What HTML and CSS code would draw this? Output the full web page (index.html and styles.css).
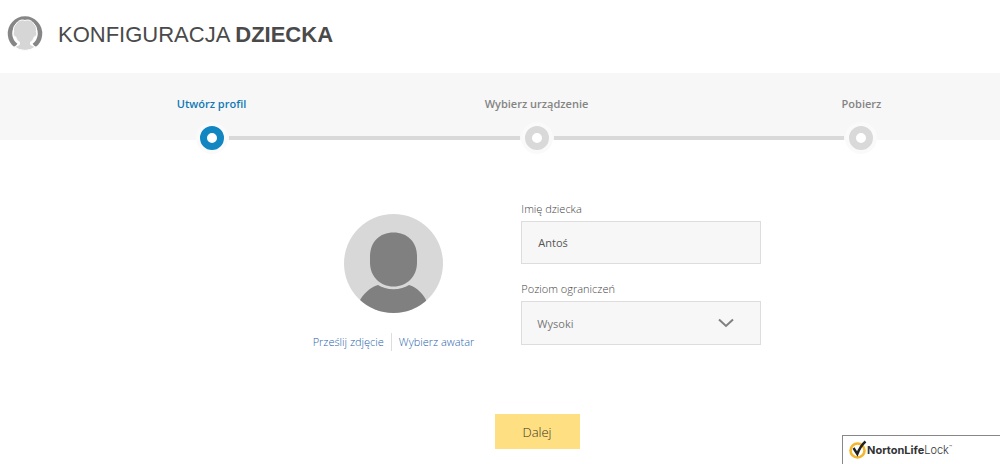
FILE: index.html
```html
<!DOCTYPE html>
<html lang="pl">

<head>
  <meta charset="UTF-8">
  <meta name="viewport" content="width=device-width, initial-scale=1.0">
  <title>Konfiguracja dziecka</title>
  <link rel="stylesheet" href="styles.css">
</head>

<body>
  <header class="header">
    <svg class="header-icon" viewBox="0 0 36 36" aria-hidden="true">
      <path d="M9 30.500A15 15 0 1 1 27 30.500" fill="none" stroke="#868686" stroke-width="4.500"/>
      <path d="M18 5.500c3.500-1.500 7.500.5 9 3.500 2.500 2 3 5.500 2.200 8 1.500 2-.2 4.500-2 5-.7 3-2.200 4-3.700 5v2.500c1.500 1.200 3.500 1.500 5 2.300a17 17 0 0 1-21 0c1.500-.8 3.500-1.100 5-2.300V27c-1.500-1-3-2-3.700-5-1.800-.5-3.500-3-2-5-.8-2.500-.3-6 2.200-8C10.500 6 14.500 4 18 5.500z" fill="#d6d6d6" stroke="#fff" stroke-width="1"/>
    </svg>
    <h1 class="title">KONFIGURACJA <strong>DZIECKA</strong></h1>
  </header>

  <nav class="steps" aria-label="Kroki">
    <div class="steps-list">
      <div class="step active" aria-current="step">
        <span class="step-label">Utwórz profil</span>
        <span class="step-dot"></span>
      </div>
      <div class="step-line"></div>
      <div class="step">
        <span class="step-label">Wybierz urządzenie</span>
        <span class="step-dot"></span>
      </div>
      <div class="step-line"></div>
      <div class="step">
        <span class="step-label">Pobierz</span>
        <span class="step-dot"></span>
      </div>
    </div>
  </nav>

  <main class="main">
    <form class="form">
      <div class="profile">
        <section class="avatar">
          <svg class="avatar-img" viewBox="0 0 99 99" role="img" aria-label="Awatar">
            <clipPath id="circle"><circle cx="49.500" cy="49.500" r="49.500"/></clipPath>
            <g clip-path="url(#circle)">
              <rect width="99" height="99" fill="#d8d8d8"/>
              <path d="M49.500 18.500c14 0 23.500 9.500 23.500 24v6c0 14-10 24-23.500 24S26 62.500 26 48.500v-6c0-14.500 9.500-24 23.500-24z" fill="#808080"/>
              <path d="M34 71c4 2.700 9.500 4.200 15.500 4.200S61 73.700 65 71c8 2.500 14.500 9 18 17v12H15V88c4-8 11-14.500 19-17z" fill="#808080"/>
            </g>
          </svg>
          <div class="avatar-links">
            <a href="#upload">Prześlij zdjęcie</a>
            <a href="#avatar">Wybierz awatar</a>
          </div>
        </section>

        <section class="fields">
          <label class="label" for="name">Imię dziecka</label>
          <input class="control" id="name" type="text" value="Antoś">
          <label class="label" for="level">Poziom ograniczeń</label>
          <div class="select">
            <select class="control" id="level">
              <option>Wysoki</option>
            </select>
            <svg class="arrow" viewBox="0 0 16 10" aria-hidden="true">
              <path d="M1 1.500L8 8l7-6.500" fill="none" stroke="#808080" stroke-width="2"/>
            </svg>
          </div>
        </section>
      </div>
      <button class="next" type="button">Dalej</button>
    </form>
  </main>

  <footer class="brand">
    <svg class="brand-icon" viewBox="0 0 18 20" aria-hidden="true">
      <circle cx="8.500" cy="10.500" r="7" fill="none" stroke="#f5b52c" stroke-width="2.600"/>
      <path d="M4.500 8l3.800 6C10 9.500 12.500 5 16.500 1.500" fill="none" stroke="#222" stroke-width="2.400"/>
    </svg>
    <span class="brand-name"><b>NortonLife</b>Lock<sup>™</sup></span>
  </footer>
</body>

</html>
```
FILE: styles.css
```css
html {
  box-sizing: border-box;
  font-family: "Open Sans", "Noto Sans", sans-serif;
  font-size: 11px;
  font-weight: 300;
}

*,
*::before,
*::after {
  box-sizing: inherit;
}

body {
  margin: 0;
  color: #444;
  background-color: #fff;
}

.header {
  display: flex;
  align-items: center;
  gap: 15px;
  padding: 15px 8px 22px 7px;
}

.header-icon {
  width: 36px;
  height: 36px;
}

.title {
  margin: 4px 0 0;
  color: #4a4a4a;
  font-family: "Liberation Sans", Arial, sans-serif;
  font-size: 22px;
  font-weight: normal;
  line-height: 32px;
}

.steps {
  padding: 22px 0 0 73px;
  background-color: #f7f7f7;
}

.steps-list {
  display: flex;
  align-items: flex-end;
  width: 85%;
  margin: 0 auto;
}

.step {
  display: flex;
  flex-direction: column;
  align-items: center;
  gap: 13px;
  width: 138px;
  color: #848484;
}

.step-label {
  font-weight: 600;
  line-height: 18px;
  white-space: nowrap;
}

/* the dots hang over the lower edge of the grey band */
.step-dot {
  width: 24px;
  height: 24px;
  margin-bottom: -10px;
  border: 7px solid #d9d9d9;
  border-radius: 50%;
  background-color: #fff;
  box-shadow: 0 0 0 4px #fafafa;
}

.step.active {
  color: #1179b5;
}

.step.active .step-dot {
  border-color: #1186c1;
}

.step-line {
  flex: 1;
  height: 4px;
  margin: 0 -52px;
  background-color: #d9d9d9;
}

.main {
  padding: 60px 0 0 74px;
}

.form {
  display: flex;
  flex-direction: column;
  align-items: center;
  gap: 69px;
}

.profile {
  display: flex;
  gap: 47px;
}

.avatar {
  display: flex;
  flex-direction: column;
  align-items: center;
  gap: 20px;
  padding-top: 14px;
}

.avatar-img {
  width: 99px;
  height: 99px;
}

.avatar-links {
  display: flex;
  line-height: 18px;
}

.avatar-links a {
  color: #1f5fac;
  text-decoration: none;
}

.avatar-links a + a {
  margin-left: 7px;
  padding-left: 7px;
  border-left: 1px solid #ddd;
}

.fields {
  display: flex;
  flex-direction: column;
  width: 240px;
}

.label {
  margin-bottom: 4px;
  line-height: 17px;
}

.control {
  width: 100%;
  height: 43px;
  margin: 0 0 16px;
  padding: 0 16px;
  border: 1px solid #ddd;
  border-radius: 0;
  background-color: #f7f7f7;
  color: #555;
  font: inherit;
  font-weight: 400;
}

.select {
  position: relative;
}

.select .control {
  appearance: none;
  height: 44px;
  margin: 0;
  padding: 0 15px;
  color: #777;
}

.arrow {
  position: absolute;
  top: 17px;
  right: 27px;
  width: 16px;
  height: 10px;
  pointer-events: none;
}

.next {
  width: 85px;
  height: 35px;
  margin-top: -6px;
  padding: 0;
  border: 0;
  background-color: #fee083;
  color: #3d3520;
  font-family: inherit;
  font-size: 13px;
  font-weight: 300;
}

.brand {
  position: fixed;
  right: 0;
  bottom: 0;
  display: flex;
  align-items: center;
  width: 158px;
  height: 29px;
  padding-left: 6px;
  border: 1px solid #888;
  border-width: 1px 0 0 1px;
  background-color: #fff;
  color: #333;
}

.brand-icon {
  width: 18px;
  height: 20px;
}

.brand-name {
  font-family: Inter, "Liberation Sans", sans-serif;
  font-size: 11px;
  line-height: 16px;
}

.brand-name b {
  font-weight: 700;
}

.brand-name sup {
  font-size: 5px;
  line-height: 0;
}
```
